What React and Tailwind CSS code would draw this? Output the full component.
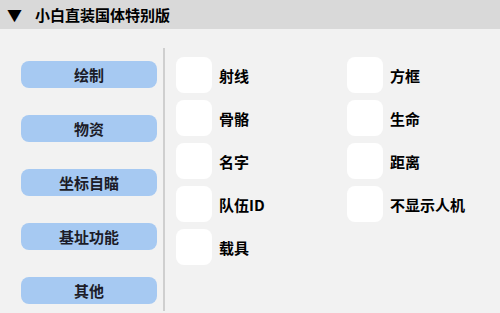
import React from "react";

const MENU = ["绘制", "物资", "坐标自瞄", "基址功能", "其他"];

const LEFT_OPTS = ["射线", "骨骼", "名字", "队伍ID", "载具"];
const RIGHT_OPTS = ["方框", "生命", "距离", "不显示人机"];

const Option = ({ label }) => (
  <div className="flex items-center h-[36px]">
    <div className="w-[36px] h-[36px] rounded-[8px] bg-white shrink-0" />
    <span className="ml-[7px] text-[15px] font-bold text-black leading-none">
      {label}
    </span>
  </div>
);

const App = () => {
  return (
    <div
      className="w-[500px] h-[313px] bg-[#f2f2f2] flex flex-col overflow-hidden"
      style={{ fontFamily: '"Noto Sans CJK SC", "Liberation Sans", sans-serif' }}
    >
      {/* Header */}
      <div className="h-[29px] bg-[#d9d9d9] flex items-center shrink-0">
        <span className="ml-[7px] text-[15px] leading-none text-black">▼</span>
        <span className="ml-[13px] text-[15px] font-bold text-black leading-none">
          小白直装国体特别版
        </span>
      </div>

      <div className="flex flex-1">
        {/* Menu */}
        <div className="w-[163px] flex flex-col gap-[27px] pt-[32px] pl-[21px] pr-[6px]">
          {MENU.map((m) => (
            <button
              key={m}
              className="h-[27px] w-[136px] rounded-[8px] bg-[#a6c9f2] text-[15px] font-bold text-[#1c1c28] flex items-center justify-center leading-none"
            >
              {m}
            </button>
          ))}
        </div>

        {/* Divider */}
        <div className="w-[2px] bg-[#cfcfcf] mt-[19px] mb-[2px]" />

        {/* Options */}
        <div className="flex pt-[28px] pl-[11px]">
          <div className="w-[171px] flex flex-col gap-[7px]">
            {LEFT_OPTS.map((o) => (
              <Option key={o} label={o} />
            ))}
          </div>
          <div className="flex flex-col gap-[7px]">
            {RIGHT_OPTS.map((o) => (
              <Option key={o} label={o} />
            ))}
          </div>
        </div>
      </div>
    </div>
  );
};

export default App;
